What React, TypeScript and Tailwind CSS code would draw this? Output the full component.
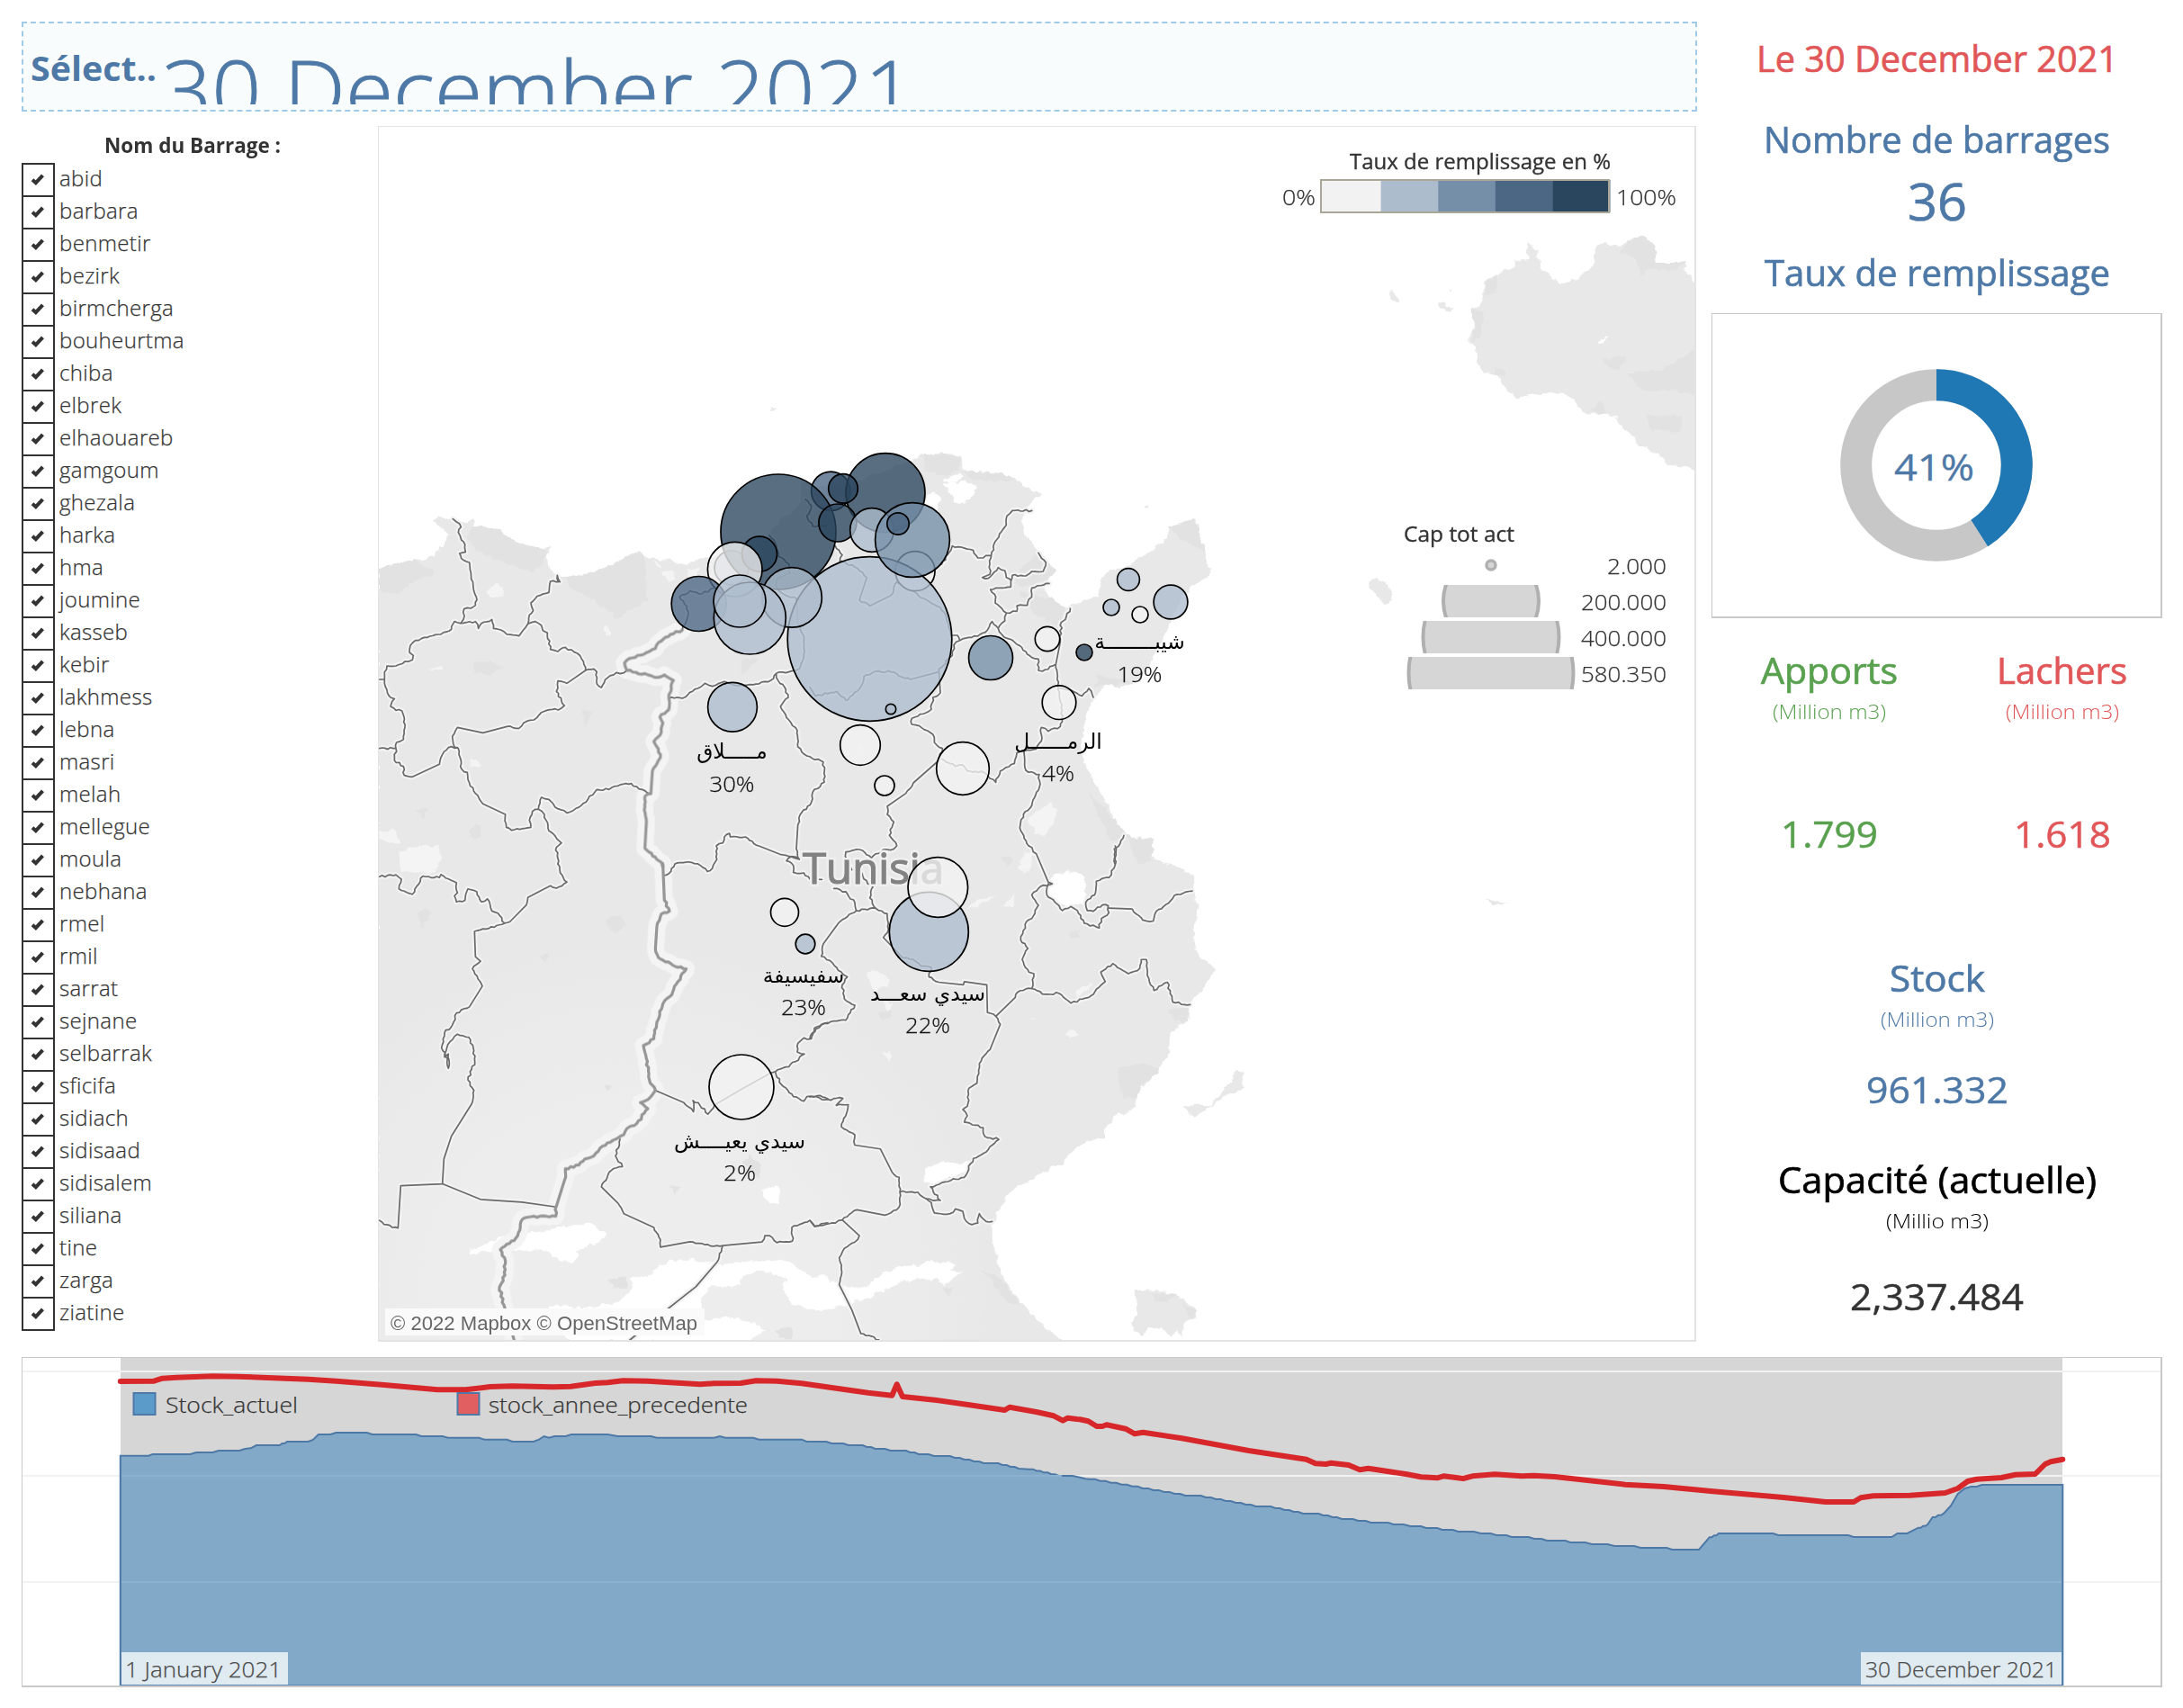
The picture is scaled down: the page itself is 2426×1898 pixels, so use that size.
import { useLayoutEffect, useRef } from "react";

/** Text whose glyphs are stretched or narrowed so that it spans exactly `w` pixels. */
function Fit({ w, children, className = "" }: { w: number; children: string; className?: string }) {
  const ref = useRef<HTMLSpanElement>(null);
  useLayoutEffect(() => {
    const el = ref.current;
    if (!el) return;
    el.style.transform = "none";
    el.style.transform = `scaleX(${w / el.getBoundingClientRect().width})`;
  }, [w, children]);
  return (
    <span className={`block shrink-0 ${className}`} style={{ width: w }}>
      <span ref={ref} className="inline-block origin-left whitespace-nowrap align-top">
        {children}
      </span>
    </span>
  );
}

const dams = [
  "abid", "barbara", "benmetir", "bezirk", "birmcherga", "bouheurtma", "chiba", "elbrek", "elhaouareb",
  "gamgoum", "ghezala", "harka", "hma", "joumine", "kasseb", "kebir", "lakhmess", "lebna", "masri", "melah",
  "mellegue", "moula", "nebhana", "rmel", "rmil", "sarrat", "sejnane", "selbarrak", "sficifa", "sidiach",
  "sidisaad", "sidisalem", "siliana", "tine", "zarga", "ziatine",
];

const levels = ["#f2f2f2", "#adbccd", "#768fa9", "#4b6783", "#2a455e"];

// x, y, radius, colour level
const bubbles: [number, number, number, number][] = [
  [813, 631, 19, 1], [923.3, 545.8, 21.7, 3], [865, 591, 64, 4], [844, 615.7, 19.5, 4], [816.7, 632.7, 30.3, 0],
  [776.7, 671, 30.5, 3], [984, 547.6, 44, 4], [937, 542.9, 16.3, 4], [930.9, 581, 21, 4], [969, 589, 24.3, 1],
  [1017, 634.7, 22, 0], [966.5, 710, 91.3, 1], [1014, 600, 41.4, 2], [998, 582, 12.2, 3], [880, 663.9, 33.3, 1],
  [833.3, 687, 40, 1], [822, 668, 29, 1], [814, 785.7, 27.4, 1], [1101, 731, 24.5, 2], [1254, 644, 12.4, 1],
  [1301, 669, 18.9, 1], [1235, 675, 9, 1], [1267, 683, 9, 0], [1164, 710, 13.7, 0], [1205, 725, 9, 4],
  [1177, 780.7, 18.8, 0], [990, 788, 5.7, 1], [956, 828, 22.3, 0], [983, 873, 11, 0], [1070, 854, 29.3, 0],
  [1032.3, 1035.4, 44, 1], [1042.3, 986, 33.3, 0], [872, 1013.8, 15.5, 0], [895, 1049, 10.8, 1], [824, 1208, 36, 0],
];

const NW = "translate(420 480) scale(.33333)";
const NE = "translate(900 480) scale(.33333)";
const SW = "translate(420 960) scale(.33333 .33801)";
const SE = "translate(900 940) scale(.33333 .35075)";
const SICILY = "translate(1380 120) scale(.66709 .44643)";

const land: [string, string][] = [
  [NW, "M0,452 L45,448 80,435 125,423 150,427 190,410 220,375 230,345 215,325 182,292 205,282 232,290 250,296 275,300 298,300 312,290 320,300 315,315 340,322 395,320 410,335 430,350 465,368 495,380 540,390 576,382 562,410 570,455 590,475 620,485 670,480 720,465 780,440 868,396 890,415 940,428 975,425 1000,440 1050,435 1100,415 1145,412 1240,400 1300,345 1350,285 1400,250 1420,200 1445,160 V1445 H0Z"],
  [NE, "M-30,170 L20,180 130,180 200,150 300,110 345,90 380,75 430,73 505,80 510,120 540,150 600,150 640,137 690,160 730,190 775,208 745,225 735,250 715,270 710,310 725,350 760,400 790,430 822,458 790,495 785,530 800,555 850,585 900,570 960,545 970,500 990,465 1030,455 1080,435 1130,400 1195,350 1195,318 1240,312 1283,290 1298,310 1293,345 1315,385 1320,430 1338,455 1325,485 1290,500 1240,550 1210,620 1180,680 1150,740 1120,800 1080,835 1030,850 985,845 950,880 925,930 910,980 905,1040 915,1100 940,1150 990,1240 1020,1300 1070,1355 1100,1360 1145,1355 1135,1400 V1445 H-30Z"],
  [SW, "M0,-10 H1445 V1600 H0Z"],
  [SE, "M-10,0 H1135 L1140,25 1170,50 1230,65 1282,95 1280,180 1300,182 1285,220 1278,280 1283,320 1310,360 1355,392 1335,410 1315,450 1268,500 1265,545 1230,570 1200,600 1198,650 1160,715 1100,770 1088,800 1080,830 1050,850 1020,850 990,890 980,925 920,935 880,960 840,1010 780,1030 730,1060 680,1085 650,1120 625,1160 608,1200 608,1250 625,1310 645,1370 680,1420 740,1480 800,1540 845,1568 V1600 H-10Z M1085,1410 L1120,1405 1200,1415 1240,1430 1290,1475 1285,1495 1250,1510 1240,1560 1225,1535 1200,1555 1175,1525 1130,1530 1110,1550 1085,1540 1075,1510 1090,1480Z M1240,822 L1330,825 1380,770 1405,745 1420,705 1450,720 1440,745 1450,770 1400,785 1345,818 1280,860Z"],
  [SICILY, "M770,440 L755,430 740,405 738,380 725,385 710,390 690,385 683,350 668,315 645,330 630,345 605,338 590,345 585,395 560,425 530,437 515,420 500,405 490,355 474,335 474,355 480,375 455,382 452,395 425,412 405,435 400,480 390,500 385,560 377,575 390,600 392,635 405,660 425,665 440,700 457,722 495,710 535,712 555,728 570,760 605,762 620,768 645,810 658,832 700,870 710,888 745,895 770,915Z M246,457 L256,460 262,483 250,478Z M327,487 L335,485 340,495 353,500 350,507 330,500Z M342,445 L348,450 346,460Z M212,1180 L222,1171 236,1178 252,1200 250,1225 240,1235 228,1220 212,1190Z"],
];

const shade: [string, string][] = [
  [NW, "M315,315 L395,320 465,368 560,392 562,420 520,470 440,440 330,400 300,350Z M0,455 L125,425 190,470 120,500 60,540 0,530Z M780,440 L868,398 890,415 900,560 800,620 720,560 640,520 620,485 720,465Z M315,770 L370,765 418,785 370,812 320,800Z M680,920 L715,935 690,985Z M1215,760 L1275,755 1210,810Z M130,1260 L170,1255 150,1285Z M305,1320 L345,1310 340,1350 310,1350Z"],
  [NE, "M380,75 L505,80 500,120 450,150 380,130Z M510,130 L640,137 690,160 600,165 540,160Z M760,400 L822,458 790,495 700,520 680,480Z M1195,318 L1283,290 1320,400 1250,370Z M700,530 L800,555 850,585 830,650 740,600Z M960,810 L1080,835 985,845 950,850Z M930,1200 L1070,1355 1000,1360Z M1060,1355 L1145,1355 1140,1430 1090,1440Z"],
  [SW, "M128,165 L155,145 182,165 150,208Z M760,180 L800,172 828,200 790,228 765,205Z M540,305 L570,292 560,322Z M750,720 L780,730 765,748Z M972,1055 L1010,1060 990,1085Z M1215,980 L1240,955 1275,985 1270,1035 1230,1000Z M765,1365 L830,1360 830,1390 790,1398Z M1330,1530 L1380,1525 1380,1560 1340,1560Z"],
  [SE, "M1030,700 L1130,688 1165,712 1100,770 1085,800 1045,800 1030,740Z M1190,520 L1265,505 1260,550 1215,555Z M635,40 L660,30 685,45 660,62Z M862,270 L900,265 900,290 870,295Z M225,530 L275,520 270,545 240,552Z M570,1340 L640,1375 700,1455 660,1450 610,1385Z M440,1400 L480,1405 460,1425Z M1140,1415 L1220,1420 1190,1450 1150,1445Z M1240,1450 L1290,1475 1270,1500Z"],
  [SICILY, "M645,330 L668,315 690,350 690,385 740,385 720,405 680,400 665,420 655,370 630,362Z M405,440 L425,415 425,462 405,465Z M385,500 L402,505 400,560 385,585Z M600,625 L640,620 630,650 612,650Z M640,660 L700,650 755,600 755,715 720,700 670,705Z M580,755 L600,728 608,762Z M675,765 L735,765 730,805 680,800Z M425,645 L440,655 438,672 420,660Z"],
];

const water: [string, string][] = [
  [NE, "M440,170 L520,165 555,180 545,215 510,240 480,235 470,200Z M390,210 L420,202 435,225 425,262 385,255Z M440,160 L500,140 515,150 480,168Z"],
  [SW, "M305,1285 L310,1270 350,1255 420,1222 400,1255 440,1245 500,1215 560,1205 620,1190 710,1182 730,1200 762,1215 758,1235 700,1255 660,1275 670,1290 640,1310 600,1300 560,1270 460,1272 400,1270 350,1275Z M570,1450 L700,1460 800,1440 850,1400 845,1365 915,1350 925,1325 980,1305 1040,1300 1150,1318 1210,1305 1290,1308 1355,1300 1400,1325 1450,1362 1500,1350 V1465 L1460,1468 1385,1450 1345,1395 1370,1365 1270,1335 1200,1365 1210,1390 1110,1385 1078,1425 1075,1480 1090,1500 1170,1492 1250,1505 1290,1535 1240,1568 640,1568 570,1500Z M1277,1070 L1300,1060 1342,1068 1335,1115 1298,1110Z"],
  [SE, "M0,1368 L50,1358 80,1385 130,1400 190,1395 240,1355 300,1330 360,1330 400,1315 490,1328 470,1345 508,1350 470,1370 450,1395 420,1375 350,1375 290,1385 220,1420 200,1435 150,1440 140,1452 20,1472 0,1468Z M384,1020 L450,1000 500,1010 540,990 520,1035 440,1060 415,1075 385,1060Z M800,110 L830,85 890,82 920,105 915,180 870,190 820,180 790,150Z"],
  [SICILY, "M593,580 L612,570 605,582 595,585Z M380,515 L388,540 382,535Z"],
];

const pale: [string, string][] = [
  [NW, "M360,535 L400,500 420,520 418,550 385,550Z M950,465 L985,462 990,490 970,500Z M1030,460 L1070,452 1060,490 1035,485Z M750,660 L765,645 775,680 755,675Z M165,792 L215,780 215,798Z M310,1085 L350,1115 310,1115Z M70,1400 L130,1380 205,1380 210,1420 180,1460 130,1475 75,1465Z M5,1330 L60,1330 70,1370 5,1360Z M920,430 L945,445 935,452Z"],
  [NE, "M725,1290 L800,1235 825,1260 815,1300 780,1350 750,1335Z M165,1045 L180,1050 175,1065Z M690,1450 L715,1400 745,1400 735,1450 715,1475Z"],
  [SW, "M70,0 H205 L180,30 130,25Z"],
  [SE, "M520,205 L560,170 618,160 580,180Z M190,400 L230,395 265,420 255,445 230,450 220,475Z M245,655 L270,650 270,690Z M850,595 L880,583 897,598 870,608Z M730,540 L757,542 745,547Z M890,455 L950,435 920,462 890,478Z M640,190 L685,150 680,195Z M245,495 L280,500 260,525Z"],
];

/** Breaks the medium-length segments of a polyline path into small, repeatable jags. */
function jagged(d: string): string {
  let seed = 7;
  const rand = () => {
    seed = (seed * 16807) % 2147483647;
    return seed / 2147483647 - 0.5;
  };
  return d
    .split("M")
    .filter((s) => s.trim())
    .map((sub) => {
      const n = (sub.match(/-?\d+(\.\d+)?/g) ?? []).map(Number);
      const out = [`${n[0]},${n[1]}`];
      for (let i = 2; i < n.length; i += 2) {
        const [x0, y0, x1, y1] = [n[i - 2], n[i - 1], n[i], n[i + 1]];
        const len = Math.hypot(x1 - x0, y1 - y0);
        if (len < 75) {
          const k = Math.floor(len / 9);
          for (let j = 1; j < k; j++) {
            const off = rand() * 7;
            out.push(
              `${(x0 + ((x1 - x0) * j) / k - ((y1 - y0) / len) * off).toFixed(1)},${(y0 + ((y1 - y0) * j) / k + ((x1 - x0) / len) * off).toFixed(1)}`,
            );
          }
        }
        out.push(`${x1},${y1}`);
      }
      return `M${out.join(" L")}`;
    })
    .join(" ");
}

const roughen = (items: [string, string][]) => items.map(([t, d]): [string, string] => [t, jagged(d)]);

const borders = roughen([
  [NW, "M250,290 L262,300 277,317 268,335 278,360 290,375 292,400 272,405 278,422 305,435 310,470 318,520 328,550 325,578 310,588 287,590 285,625 278,635 M5,825 L22,825 22,800 30,780 60,780 90,765 115,760 118,745 105,735 108,712 125,695 165,685 200,675 245,658 255,632 275,638 325,632 335,655 345,638 380,625 385,655 410,660 430,675 470,680 485,660 500,640 M607,500 L598,478 602,500 575,498 570,535 540,545 525,555 510,570 518,595 505,610 500,640 525,632 545,645 550,662 565,670 575,725 600,732 625,718 665,738 685,765 692,795 M22,825 L30,860 42,885 55,890 42,915 60,928 80,930 90,985 85,1025 62,1035 60,1055 M5,1055 L60,1055 55,1095 85,1115 88,1145 115,1150 205,1108 215,1075 235,1052 265,1052 M692,795 L630,838 600,830 595,865 622,912 610,922 545,935 520,960 495,965 470,988 430,982 350,1003 265,985 248,1015 255,1050 268,1055 280,1125 298,1135 305,1170 325,1205 350,1240 425,1275 428,1318 445,1328 510,1318 505,1295 515,1265 535,1258 545,1218 570,1225 590,1250 630,1270 660,1255 700,1225 730,1192 770,1192 800,1180 845,1172 870,1190 910,1207 M692,795 L720,790 730,800 730,840 745,852 765,820 795,802 820,803 830,795 M535,1258 L555,1275 570,1330 612,1370 595,1385 600,1440 M970,888 L1015,888 1040,868 1090,838 1115,848 1155,832 1190,845 1240,842 1310,828 1328,805 1380,797 1405,790 M1328,805 L1335,830 1355,850 1368,885 1342,915 1370,960 1398,995 1400,1050 1430,1080 1485,1100 1488,1168 1450,1200 1445,1235 1408,1275 1400,1310 1395,1390 1405,1425 1340,1408 1270,1380 1225,1350 1175,1350 1172,1338 1155,1350 1150,1370 1128,1380 1130,1425 1115,1455 1098,1465 1075,1445 1045,1435 990,1440 970,1472 950,1478 M1405,1425 L1380,1415 1362,1430 1385,1445 1385,1468 1420,1470 1440,1490 1480,1492 M1305,345 L1325,370 1335,415 1370,440 1375,470 1330,490 1330,520 1360,545 1395,555 1400,640 1420,680 1420,740 1405,790 M1425,225 L1445,245 1430,280 1450,315 1500,310 M1120,520 L1080,540 1040,530 1005,550 1030,580 1035,610 1015,660"],
  [NE, "M740,262 L675,262 657,280 655,310 618,365 605,410 600,440 600,475 575,485 595,488 628,452 650,462 655,485 672,495 M475,380 L545,395 560,420 605,412 M410,460 L440,440 470,395 475,380 M762,403 L787,435 778,465 740,465 720,480 675,478 670,517 602,525 620,550 618,570 655,603 690,598 690,580 725,578 740,540 740,520 798,505 M655,605 L650,630 628,655 640,675 690,708 740,752 762,757 762,795 775,798 820,775 M868,588 L852,625 838,635 835,700 820,775 827,845 832,870 838,920 842,965 835,982 795,998 772,985 772,1030 755,1057 725,1060 690,1070 682,1105 635,1130 620,1168 600,1155 580,1135 525,1130 510,1110 485,1115 440,1090 M832,855 L870,860 908,880 930,855 945,885 M628,655 L608,632 585,668 540,685 500,695 492,678 475,678 M500,695 L480,710 475,745 430,790 435,870 410,885 405,925 340,955 340,975 365,980 410,1008 415,1035 442,1055 430,1095 345,1170 320,1205 258,1248 258,1275 280,1300 265,1345 290,1380 280,1390 245,1392 205,1420 165,1392 120,1400 118,1415 140,1460 M715,1060 L720,1128 765,1142 765,1185 740,1245 712,1275 700,1320 730,1380 M1047,1345 L1030,1380 1015,1390 1017,1440 M85,380 L108,410 100,430 150,450 190,485 165,560 200,580 270,545 290,500 340,530 380,555 435,585 455,620 470,680 M0,850 L20,880 90,865 120,895 170,850 180,815 230,797 270,800 335,825 430,800"],
  [SW, "M5,42 L60,36 78,50 70,82 115,100 150,40 205,45 210,35 262,62 265,95 255,105 262,125 290,120 300,82 330,92 345,125 365,115 380,155 400,162 422,195 M600,0 L608,30 630,60 595,80 575,72 500,110 495,135 440,190 422,195 370,212 322,222 325,305 342,320 315,345 348,402 305,470 262,490 248,530 222,555 212,605 232,640 235,672 235,625 222,635 240,585 265,560 303,570 318,605 323,650 300,710 320,745 312,790 245,895 220,970 215,1052 76,1058 67,1197 20,1185 5,1172 M215,1052 L342,1103 480,1112 595,1128 M807,905 L792,960 815,995 778,1008 745,1062 800,1115 820,1150 920,1195 942,1235 942,1260 1040,1242 1090,1252 1150,1255 1280,1243 1290,1222 1305,1222 1330,1245 1382,1240 1380,1195 1440,1172 1457,1192 1500,1180 M1150,1255 L1130,1310 1060,1390 970,1460 840,1565 M925,745 L1020,785 1052,815 1050,778 1068,785 1100,823 1122,793 1210,742 1310,687 1325,683 1370,667 1422,625 1398,618 1400,590 1420,572 1445,575 1455,540 1500,522 M1325,683 L1345,725 1385,765 1420,780 1430,765 1465,762 1500,772"],
  [SE, "M730,0 L755,25 795,115 808,120 770,128 740,155 762,188 740,230 722,240 703,298 727,325 708,360 730,400 747,405 740,452 785,470 830,467 870,498 930,480 985,430 970,400 1010,373 1062,405 1100,388 1105,360 1122,360 1125,410 1147,458 1192,432 1210,495 1268,503 M795,120 L790,155 842,205 870,192 892,205 915,245 965,260 972,230 997,212 995,190 975,187 945,207 925,205 920,178 950,155 955,112 998,100 1018,60 1018,0 M997,197 L1075,200 1110,235 1145,238 1155,207 1195,182 1215,157 1275,143 M740,452 L693,463 685,480 620,540 635,565 605,635 565,690 557,752 530,768 525,825 510,835 525,855 515,875 578,893 583,920 630,930 595,962 545,990 515,1050 470,1060 402,1080 435,1123 388,1118 360,1097 300,1097 297,1145 250,1170 157,1153 108,1185 85,1195 15,1205 0,1187 M388,1118 L405,1130 415,1163 468,1165 485,1150 510,1158 515,1180 540,1200 560,1195 565,1165 588,1190 608,1190 M620,540 L592,528 590,440 515,430 512,440 430,432 397,415 405,385 370,380 345,360 310,355 245,290 262,265 258,215 220,198 155,205 150,180 120,145 80,135 M220,198 L200,165 210,130 180,105 165,70 M155,205 L95,245 45,310 38,350 75,370 95,395 125,415 108,440 115,485 150,505 120,552 50,562 20,580 0,610 M0,795 L60,803 110,800 88,822 128,820 105,890 150,915 150,948 235,960 275,1035 298,1050 300,1097 M108,1185 L165,1235 150,1255 115,1275 98,1305 105,1340 98,1390 140,1470 170,1545 230,1565"],
]);

const frontier = roughen([
  [NW, "M1015,660 L975,675 935,702 925,722 885,742 838,755 822,770 830,795 900,810 935,818 955,810 985,828 970,885 970,925 940,950 950,970 945,1000 920,1032 942,1075 935,1095 915,1130 910,1205 890,1215 888,1260 895,1300 890,1388 945,1435 950,1450"],
  [SW, "M950,0 L955,120 972,155 945,165 930,205 925,280 935,308 1000,340 1028,345 995,395 980,430 950,460 930,520 920,575 885,597 895,640 905,710 925,745 900,775 875,785 900,805 880,825 878,840 855,860 830,870 820,890 775,915 740,935 720,960 690,970 670,990 625,1002 622,1040 595,1125 593,1158 540,1158 483,1167 460,1230 408,1268 425,1305 418,1370 405,1392 420,1450 455,1568"],
]);

function Shapes({ items, className, w }: { items: [string, string][]; className: string; w?: number }) {
  return (
    <g className={className} strokeWidth={w} strokeLinejoin="round" strokeLinecap="round">
      {items.map(([t, d]) => (
        <path key={d} transform={t} d={d} vectorEffect="non-scaling-stroke" />
      ))}
    </g>
  );
}

const mapLabels: [string, string, number, number, number][] = [
  ["مـــــلاق", "30%", 813.5, 843, 880],
  ["شيبــــــــة", "19%", 1266.5, 721, 758],
  ["الرمــــــل", "4%", 1176, 832, 868],
  ["سفيسيفة", "23%", 893, 1092, 1128],
  ["سيدي سعـــد", "22%", 1031, 1112, 1148],
  ["سيدي يعيــــش", "2%", 822, 1276, 1312],
];

const sizeLegend: [string, number][] = [["200.000", 55], ["400.000", 77.5], ["580.350", 93.5]];

type LabelProps = { x: number; y: number; w: number; size: number; children: string; light?: boolean; fill?: string };

function Label({ x, y, w, size, children, light = false, fill = "#333" }: LabelProps) {
  return (
    <text
      x={x}
      y={y}
      textLength={w}
      lengthAdjust="spacingAndGlyphs"
      fontSize={size}
      fontWeight={light ? 300 : 400}
      fill={fill}
      stroke={fill}
      strokeWidth={light ? 0.25 : 0.35}
    >
      {children}
    </text>
  );
}

function DamMap() {
  return (
    <svg viewBox="421 141 1462 1348" className="block h-[1348px] w-[1462px]" fontFamily="'Open Sans', 'Noto Sans', sans-serif">
      <defs>
        <filter id="rough" filterUnits="userSpaceOnUse" x="400" y="120" width="1500" height="1390">
          <feTurbulence type="fractalNoise" baseFrequency="0.12" numOctaves="2" seed="4" />
          <feDisplacementMap in="SourceGraphic" scale="7" xChannelSelector="R" yChannelSelector="G" />
        </filter>
        <radialGradient id="desert" gradientUnits="userSpaceOnUse" cx="700" cy="1450" r="420">
          <stop offset="0.5" stopColor="#ededed" />
          <stop offset="1" stopColor="#ededed" stopOpacity="0" />
        </radialGradient>
        {sizeLegend.map(([label], i) => (
          <clipPath id={`band${i}`} key={label}>
            <rect x="1500" y={650 + i * 40} width="300" height="36" />
          </clipPath>
        ))}
      </defs>
      <g filter="url(#rough)">
        <Shapes items={land} className="fill-[#e8e8e8] stroke-none" />
        <rect x="415" y="1000" width="680" height="500" fill="url(#desert)" />
        <Shapes items={shade} className="fill-[#e1e2e1] stroke-none" />
        <Shapes items={pale} className="fill-[#f4f4f4] stroke-none" />
        <Shapes items={water} className="fill-white stroke-none" />
        <path d="M857,451 L862,456 856,457Z M1272,562 L1276,560 1277,565 1272,564Z" fill="#e6e8e6" />
        <path d="M1652,1000 L1676,1003 1660,1006Z M1725,906 L1730,909Z" fill="#e6e6e6" />
      </g>
      <Shapes items={frontier} className="fill-none stroke-[#f4f4f4]" w={19} />
      <Shapes items={borders} className="fill-none stroke-[#f3f3f3]" w={6} />
      <Shapes items={borders} className="fill-none stroke-[#6a6a6a]" w={1.7} />
      <Shapes items={frontier} className="fill-none stroke-[#969696]" w={3.2} />
      <text x="892" y="982" textLength="157" lengthAdjust="spacingAndGlyphs" fontSize="47" fill="none" stroke="#f0f0f0" strokeWidth="6">
        Tunisia
      </text>
      <text x="892" y="982" textLength="157" lengthAdjust="spacingAndGlyphs" fontSize="47" fill="#828282" stroke="#828282" strokeWidth="1.2">
        Tunisia
      </text>
      {bubbles.map(([x, y, r, l], i) => (
        <circle key={i} cx={x} cy={y} r={r} fill={levels[l]} fillOpacity=".78" stroke="#000" strokeWidth="1.7" />
      ))}
      {mapLabels.map(([name, pct, x, y1, y2]) => {
        const w = pct.length === 3 ? 50 : 36;
        return (
          <g key={name}>
            <text x={x} y={y1} textAnchor="middle" fontFamily="'DejaVu Sans', sans-serif" fontSize="23.3" fill="#000">{name}</text>
            <Label x={x - w / 2} y={y2} w={w} size={24} light fill="#111">{pct}</Label>
          </g>
        );
      })}
      <Label x={1500} y={188} w={290} size={24}>Taux de remplissage en %</Label>
      <Label x={1425} y={228} w={37} size={24} light>0%</Label>
      <Label x={1796} y={228} w={67} size={24} light>100%</Label>
      {levels.map((c, i) => (
        <rect key={c} x={i === 0 ? 1468 : 1471 + i * 63.6} y="200" width={i === 0 ? 67 : 64} height="36" fill={c} />
      ))}
      <rect x="1468" y="200" width="320" height="36" fill="none" stroke="#aaa798" strokeWidth="2" />
      <Label x={1560} y={602} w={123} size={24}>Cap tot act</Label>
      <circle cx="1657" cy="628" r="5" fill="#d6d6d6" stroke="#b0b0b0" strokeWidth="3.5" />
      <Label x={1786} y={638} w={66} size={24} light>2.000</Label>
      {sizeLegend.map(([label, r], i) => (
        <g key={label}>
          <circle cx="1657" cy={668 + i * 40} r={r - 2} fill="#d6d6d6" stroke="#b0b0b0" strokeWidth="4" clipPath={`url(#band${i})`} />
          <Label x={1757} y={678 + i * 40} w={95} size={24} light>{label}</Label>
        </g>
      ))}
      <rect x="428" y="1454" width="355" height="30" fill="#fafafa" />
      <text x="434" y="1478" fontSize="22.5" fontFamily="'Liberation Sans', sans-serif" fill="#666" textLength="341" lengthAdjust="spacingAndGlyphs">
        © 2022 Mapbox © OpenStreetMap
      </text>
    </svg>
  );
}

const toPage = (left: number[], right: number[]) => {
  const out: [number, number][] = [];
  for (let i = 0; i < left.length; i += 2) out.push([left[i] * 0.7781, 1480 + left[i + 1] / 3]);
  for (let i = 0; i < right.length; i += 2) out.push([1200 + right[i] * 0.78189, 1480 + right[i + 1] / 3]);
  return out;
};

const stepped = (pts: [number, number][]) =>
  pts.flatMap(([x, y], i): [number, number][] => {
    if (i === 0) return [[x, y]];
    const [px, py] = pts[i - 1];
    const n = Math.round(Math.abs(y - py) / 2);
    if (n < 2 || x - px < n * 5) return [[x, y]];
    const out: [number, number][] = [];
    for (let k = 0; k < n; k++) {
      out.push([px + ((x - px) * (k + 0.5)) / n, py + ((y - py) * k) / n]);
      out.push([px + ((x - px) * (k + 1)) / n, py + ((y - py) * (k + 1)) / n]);
    }
    return out;
  });

const join = (pts: [number, number][]) => pts.map(([x, y]) => `${x.toFixed(1)},${y.toFixed(1)}`).join(" ");

const stockNow = join(stepped(toPage(
  [172, 1180, 172, 413, 212, 413, 218, 408, 272, 408, 280, 402, 304, 402, 312, 396, 342, 396, 350, 390, 358, 388, 366, 378, 396, 378, 410, 366, 440, 366, 447, 360, 455, 342, 472, 342, 480, 336, 524, 336, 532, 342, 594, 342, 602, 348, 632, 348, 640, 353, 684, 353, 692, 359, 724, 359, 732, 366, 762, 366, 770, 359, 777, 348, 784, 353, 792, 348, 808, 348, 816, 342, 868, 342, 882, 348, 930, 348, 938, 353, 1020, 353, 1028, 348, 1036, 353, 1076, 353, 1084, 359, 1145, 359, 1152, 366, 1180, 366, 1188, 372, 1204, 372, 1212, 378, 1226, 378, 1250, 390, 1264, 390, 1272, 396, 1288, 396, 1312, 408, 1326, 408, 1334, 414, 1350, 414, 1405, 438, 1420, 438, 1455, 456, 1470, 458, 1512, 480, 1532, 480],
  [0, 485, 8, 490, 14, 491, 150, 546, 165, 546, 250, 582, 265, 582, 317, 606, 333, 606, 372, 624, 388, 624, 396, 630, 406, 630, 414, 636, 438, 636, 446, 642, 460, 642, 470, 648, 485, 648, 492, 654, 508, 654, 515, 660, 530, 660, 538, 666, 560, 666, 570, 672, 584, 672, 592, 678, 606, 678, 614, 684, 638, 684, 646, 690, 656, 690, 664, 696, 690, 696, 697, 702, 718, 702, 728, 708, 750, 708, 760, 714, 788, 714, 797, 720, 834, 720, 842, 726, 880, 726, 895, 685, 908, 672, 985, 672, 993, 678, 1092, 678, 1100, 684, 1154, 684, 1162, 672, 1176, 672, 1192, 653, 1205, 642, 1212, 618, 1228, 605, 1238, 580, 1248, 540, 1258, 522, 1267, 516, 1275, 516, 1282, 510, 1397, 510, 1397, 1180],
)));

const stockBefore = join(toPage(
  [172, 165, 220, 164, 232, 155, 252, 152, 304, 148, 340, 149, 440, 158, 480, 164, 545, 176, 625, 193, 665, 193, 700, 183, 732, 181, 790, 184, 815, 182, 850, 171, 868, 169, 890, 163, 925, 164, 1000, 175, 1020, 172, 1058, 171, 1080, 163, 1110, 164, 1145, 172, 1190, 187, 1240, 203, 1274, 212, 1281, 175, 1289, 216, 1335, 227, 1385, 244, 1435, 261, 1442, 251, 1480, 267, 1505, 280, 1518, 296, 1525, 287, 1538, 291],
  [0, 292, 12, 298, 24, 315, 32, 315, 38, 310, 65, 323, 78, 340, 90, 335, 145, 355, 240, 396, 322, 425, 335, 439, 350, 441, 357, 437, 382, 444, 398, 460, 410, 455, 465, 475, 485, 484, 508, 487, 517, 481, 545, 489, 558, 481, 590, 475, 628, 481, 645, 479, 675, 483, 775, 509, 830, 516, 900, 532, 1000, 552, 1060, 567, 1100, 567, 1110, 553, 1128, 547, 1180, 545, 1230, 537, 1248, 522, 1262, 498, 1275, 491, 1310, 486, 1330, 476, 1358, 474, 1372, 441, 1380, 433, 1397, 425],
));

function StockChart() {
  return (
    <svg viewBox="25 1509 2376 364" className="block h-[364px] w-[2376px]" fontFamily="'Open Sans', 'Noto Sans', sans-serif">
      <rect x="134" y="1509" width="2158" height="364" fill="#d6d6d6" />
      {[1524, 1640, 1758].map((y) => (
        <rect key={y} x="25" y={y - 1} width="2376" height="2" fill="#f2f2f2" />
      ))}
      <polygon points={stockNow} fill="#82a9c7" stroke="#4e79a7" strokeWidth="2" />
      <rect x="135" y="1757" width="2156" height="2" fill="#8db2d1" />
      <rect x="135" y="1639" width="1045" height="2" fill="#8db2d1" />
      <polyline points={stockBefore} fill="none" stroke="#d8272a" strokeWidth="6" strokeLinejoin="round" strokeLinecap="round" />
      <g stroke="#4e79a7" strokeWidth="2">
        <rect x="148.5" y="1548" width="24" height="24" fill="#5a9bc9" />
        <rect x="508.5" y="1548" width="24" height="24" fill="#e15f61" />
      </g>
      <Label x={184} y={1570} w={147} size={24} light>Stock_actuel</Label>
      <Label x={543} y={1570} w={288} size={24} light>stock_annee_precedente</Label>
      <rect x="135" y="1836" width="185" height="36" fill="#e0eaf1" />
      <rect x="2068" y="1836" width="223" height="36" fill="#e0eaf1" />
      <Label x={139} y={1864} w={174} size={24} light fill="#4a4a4a">1 January 2021</Label>
      <Label x={2073} y={1864} w={213} size={24} light fill="#4a4a4a">30 December 2021</Label>
    </svg>
  );
}

function Donut() {
  return (
    <div className="flex h-[339px] items-center justify-center border border-[#c9c9c9] border-r-2 border-b-2">
      <svg viewBox="0 0 214 214" className="h-[214px] w-[214px]" fontFamily="'Open Sans', 'Noto Sans', sans-serif">
        <circle cx="107" cy="107" r="89.3" fill="none" stroke="#c7c7c7" strokeWidth="35" />
        <circle cx="107" cy="107" r="89.3" fill="none" stroke="#1f77b4" strokeWidth="35" pathLength="100" strokeDasharray="41 59" transform="rotate(-90 107 107)" />
        <Label x={60} y={124} w={89} size={40} fill="#4e79a7">41%</Label>
      </svg>
    </div>
  );
}

function Flow({ title, tw, value, className }: { title: string; tw: number; value: string; className: string }) {
  return (
    <div className={`flex flex-col items-center ${className}`}>
      <Fit w={tw} className="text-[40px] leading-[40px] [-webkit-text-stroke:0.7px]">{title}</Fit>
      <Fit w={126} className="mt-[13px] text-[22px] leading-6 font-light">(Million m3)</Fit>
      <Fit w={108} className="mt-[105px] text-[40px] leading-[40px] [-webkit-text-stroke:0.5px]">{value}</Fit>
    </div>
  );
}

export default function App() {
  return (
    <div className="flex h-[1898px] w-[2426px] flex-col overflow-hidden bg-white pt-6 pr-[23px] pl-6 font-['Open_Sans','Noto_Sans',sans-serif] text-[#333]">
      <div className="flex h-[1468px] shrink-0 gap-4">
        <div className="flex w-[1862px] flex-col">
          <header className="h-[100px] shrink-0 border-2 border-dashed border-[#a0cbe8] bg-[#f9fcfd]">
            <div className="flex h-[90px] overflow-hidden pl-2 text-[#4e79a7]">
              <Fit w={140} className="mt-[29px] h-10 text-[38px] leading-[40px] font-bold">Sélect..</Fit>
              <Fit w={836} className="mt-[27px] ml-[6px] h-[63px] text-[92px] leading-[92px] font-light [-webkit-text-stroke:0.9px]">30 December 2021</Fit>
            </div>
          </header>
          <div className="mt-4 flex">
            <aside className="w-[396px]">
              <div className="flex h-[41px] pt-[7px] pl-[92px]">
                <Fit w={196} className="text-[23px] leading-7 font-bold">Nom du Barrage :</Fit>
              </div>
              <ul>
                {dams.map((d) => (
                  <li key={d} className="flex h-9">
                    <span className="flex h-[38px] w-[37px] items-center justify-center border-2 border-[#333]">
                      <svg viewBox="0 0 16 13" className="mr-px mb-px h-[13px] w-4">
                        <path d="M2 6.8 L5.8 10.2 L13.5 1.8" fill="none" stroke="#333" strokeWidth="4" />
                      </svg>
                    </span>
                    <span className="ml-[5px] text-[24px] leading-[33px] font-light tracking-[0.35px] [-webkit-text-stroke:0.25px]">{d}</span>
                  </li>
                ))}
              </ul>
            </aside>
            <div className="h-[1351px] w-[1465px] border border-[#e3e3e3] border-r-2 border-b-2">
              <DamMap />
            </div>
          </div>
        </div>

        <section className="flex w-[501px] flex-col">
          <div className="flex flex-col items-center text-[#4e79a7] [-webkit-text-stroke:0.7px]">
            <Fit w={402} className="mt-[21px] text-[40px] leading-[40px] text-[#e15759]">Le 30 December 2021</Fit>
            <Fit w={385} className="mt-[50px] text-[40px] leading-[40px]">Nombre de barrages</Fit>
            <Fit w={66} className="mt-5 text-[56px] leading-[56px]">36</Fit>
            <Fit w={384} className="mt-8 mb-[25px] text-[40px] leading-[40px]">Taux de remplissage</Fit>
          </div>
          <Donut />
          <div className="mt-[38px] flex justify-between px-[1px]">
            <Flow title="Apports" tw={152} value="1.799" className="w-[260px] text-[#59a14f]" />
            <Flow title="Lachers" tw={145} value="1.618" className="w-[221px] text-[#e15759]" />
          </div>
          <div className="mt-[120px] flex flex-col items-center text-[#4e79a7]">
            <Fit w={106} className="text-[40px] leading-[40px] [-webkit-text-stroke:0.7px]">Stock</Fit>
            <Fit w={126} className="mt-[13px] text-[22px] leading-6 font-light">(Million m3)</Fit>
            <Fit w={158} className="mt-[47px] text-[40px] leading-[40px] [-webkit-text-stroke:0.5px]">961.332</Fit>
          </div>
          <div className="mt-[60px] flex flex-col items-center text-black">
            <Fit w={354} className="text-[40px] leading-[40px] [-webkit-text-stroke:0.7px]">Capacité (actuelle)</Fit>
            <Fit w={114} className="mt-[13px] text-[22px] leading-6 font-light">(Millio m3)</Fit>
            <Fit w={193} className="mt-[53px] text-[40px] leading-[40px] text-[#333] [-webkit-text-stroke:0.5px]">2,337.484</Fit>
          </div>
        </section>
      </div>
      <div className="mt-4 h-[367px] shrink-0 border border-[#c9c9c9] border-r-2 border-b-2">
        <StockChart />
      </div>
    </div>
  );
}
